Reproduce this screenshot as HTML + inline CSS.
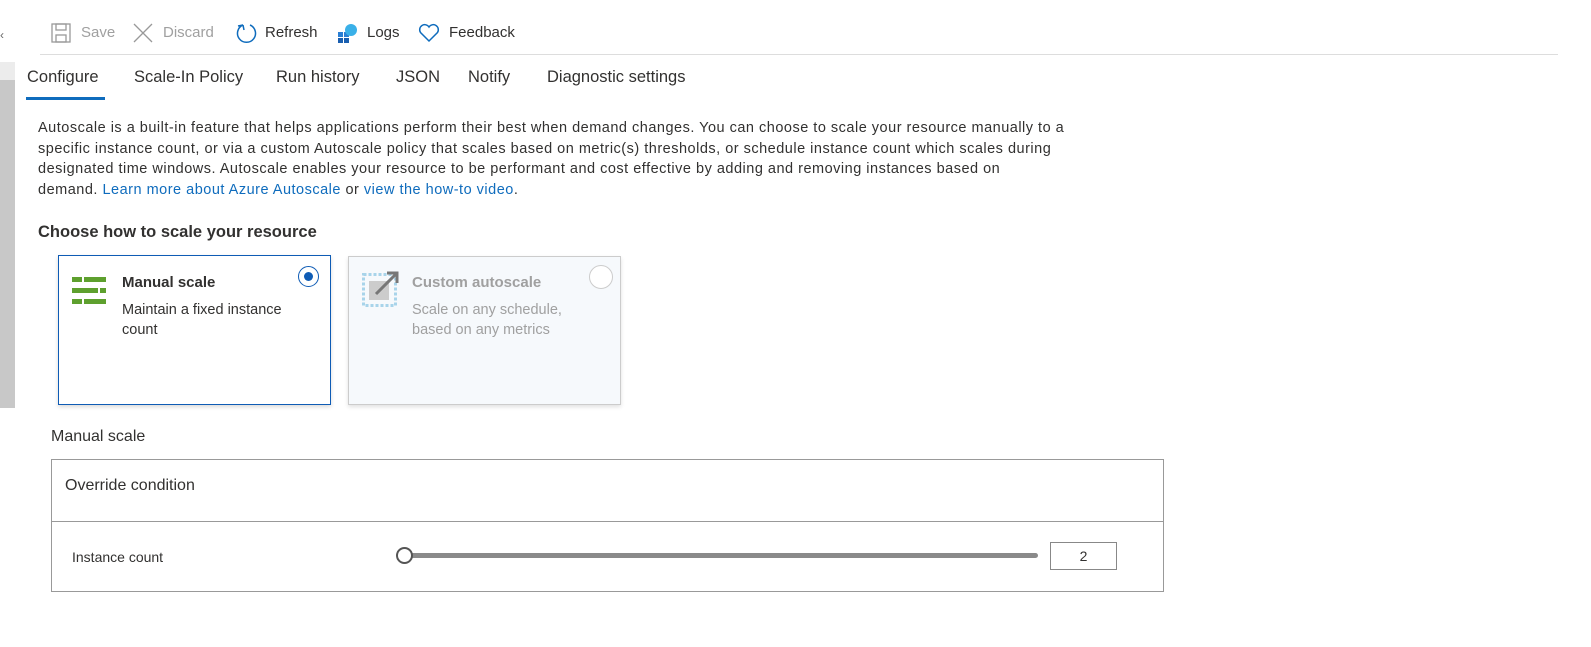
<!DOCTYPE html>
<html><head><meta charset="utf-8"><style>
body{margin:0;width:1591px;height:647px;background:#fff;font-family:"Liberation Sans",sans-serif;color:#323130;position:relative;overflow:hidden}
.a{position:absolute}
.tb{top:24px;font-size:15px;}
.tab{top:68px;font-size:16.5px;color:#323130}
p{margin:0}
</style></head><body>
<div class="a" style="left:0;top:28px;font-size:12px;color:#666">‹</div>
<div class="a" style="left:0;top:62px;width:15px;height:346px;background:#ececec"></div>
<div class="a" style="left:0;top:80px;width:15px;height:328px;background:#c8c8c8"></div>
<div class="a" style="left:40px;top:54px;width:1518px;height:1px;background:#ddd"></div>

<svg class="a" style="left:51px;top:23px" width="20" height="20" viewBox="0 0 20 20" fill="none" stroke="#999" stroke-width="1.3"><rect x="1" y="1" width="18" height="18"/><rect x="5" y="1" width="10" height="6"/><rect x="5" y="12" width="10" height="7"/></svg>
<div class="a tb" style="left:81px;color:#a0a0a0">Save</div>
<svg class="a" style="left:133px;top:23px" width="20" height="20" stroke="#999" stroke-width="1.3"><path d="M1 1L19 19M19 1L1 19"/></svg>
<div class="a tb" style="left:163px;color:#a0a0a0">Discard</div>
<svg class="a" style="left:235px;top:22px" width="22" height="22" fill="none" stroke="#0f6cbd" stroke-width="1.5"><path d="M8 3A9 9 0 1 0 15 3"/><path d="M8 3L9 8M8 3L3 4"/></svg>
<div class="a tb" style="left:265px">Refresh</div>
<svg class="a" style="left:336px;top:22px" width="22" height="22"><rect x="2" y="10" width="5" height="5" fill="#2a7fd4"/><rect x="8" y="10" width="5" height="5" fill="#2a7fd4"/><rect x="2" y="16" width="5" height="5" fill="#1a5fb0"/><rect x="8" y="16" width="5" height="5" fill="#1a5fb0"/><circle cx="15" cy="8" r="6" fill="#3ab0e8"/></svg>
<div class="a tb" style="left:367px">Logs</div>
<svg class="a" style="left:418px;top:23px" width="22" height="20" fill="none" stroke="#0f6cbd" stroke-width="1.5"><path d="M11 18L2.5 9.5A5 5 0 0 1 11 4A5 5 0 0 1 19.5 9.5Z"/></svg>
<div class="a tb" style="left:449px">Feedback</div>

<div class="a tab" style="left:27px">Configure</div>
<div class="a" style="left:26px;top:97px;width:79px;height:3px;background:#0f6cbd"></div>
<div class="a tab" style="left:134px">Scale-In Policy</div>
<div class="a tab" style="left:276px">Run history</div>
<div class="a tab" style="left:396px">JSON</div>
<div class="a tab" style="left:468px">Notify</div>
<div class="a tab" style="left:547px">Diagnostic settings</div>

<p class="a" style="left:38px;top:118px;white-space:nowrap;font-size:14.5px;letter-spacing:0.5px;line-height:20.5px">Autoscale is a built-in feature that helps applications perform their best when demand changes. You can choose to scale your resource manually to a<br>specific instance count, or via a custom Autoscale policy that scales based on metric(s) thresholds, or schedule instance count which scales during<br>designated time windows. Autoscale enables your resource to be performant and cost effective by adding and removing instances based on<br>demand. <span style="color:#0f6cbd">Learn more about Azure Autoscale</span> or <span style="color:#0f6cbd">view the how-to video</span>.</p>

<div class="a" style="left:38px;top:223px;font-size:16.5px;font-weight:bold">Choose how to scale your resource</div>

<div class="a" style="left:58px;top:255px;width:271px;height:148px;border:1px solid #0f5cb5;box-shadow:0 2px 4px rgba(0,0,0,.15)"></div>
<svg class="a" style="left:72px;top:277px" width="34" height="30"><g fill="#5ea02e"><rect x="0" y="0" width="10" height="5"/><rect x="12" y="0" width="22" height="5"/><rect x="0" y="11" width="26" height="5"/><rect x="28" y="11" width="6" height="5"/><rect x="0" y="22" width="10" height="5"/><rect x="12" y="22" width="22" height="5"/></g></svg>
<div class="a" style="left:122px;top:274px;font-size:15px;font-weight:bold">Manual scale</div>
<div class="a" style="left:122px;top:300px;font-size:14.5px;line-height:20px;width:180px">Maintain a fixed instance count</div>
<div class="a" style="left:298px;top:266px;width:21px;height:21px;border:1px solid #0f5cb5;border-radius:50%;box-sizing:border-box"></div>
<div class="a" style="left:304px;top:272px;width:9px;height:9px;background:#0f5cb5;border-radius:50%"></div>

<div class="a" style="left:348px;top:256px;width:271px;height:147px;border:1px solid #ccc;background:#f6f9fc;box-shadow:0 2px 4px rgba(0,0,0,.12)"></div>
<svg class="a" style="left:362px;top:270px" width="38" height="38"><rect x="1.5" y="4.5" width="32" height="31" fill="none" stroke="#a8d4ea" stroke-width="3" stroke-dasharray="3 2"/><rect x="7" y="11" width="20" height="19" fill="#ccc"/><path d="M14 24L34 4M25 3h10v10" stroke="#777" stroke-width="3" fill="none"/></svg>
<div class="a" style="left:412px;top:274px;font-size:15px;font-weight:bold;color:#a0a0a0">Custom autoscale</div>
<div class="a" style="left:412px;top:300px;font-size:14.5px;line-height:20px;width:180px;color:#a0a0a0">Scale on any schedule, based on any metrics</div>
<div class="a" style="left:589px;top:265px;width:24px;height:24px;border:1px solid #ccc;border-radius:50%;box-sizing:border-box;background:#fff"></div>

<div class="a" style="left:51px;top:428px;font-size:16px">Manual scale</div>
<div class="a" style="left:51px;top:459px;width:1111px;height:131px;border:1px solid #999"></div>
<div class="a" style="left:51px;top:521px;width:1112px;height:1px;background:#999"></div>
<div class="a" style="left:65px;top:477px;font-size:16px">Override condition</div>
<div class="a" style="left:72px;top:549px;font-size:14px">Instance count</div>
<div class="a" style="left:404px;top:553px;width:634px;height:5px;background:#8a8a8a;border-radius:3px"></div>
<div class="a" style="left:396px;top:547px;width:17px;height:17px;border:2px solid #555;border-radius:50%;background:#fff;box-sizing:border-box"></div>
<div class="a" style="left:1050px;top:542px;width:67px;height:28px;border:1px solid #888;box-sizing:border-box;text-align:center;line-height:26px;font-size:14px">2</div>
</body></html>
